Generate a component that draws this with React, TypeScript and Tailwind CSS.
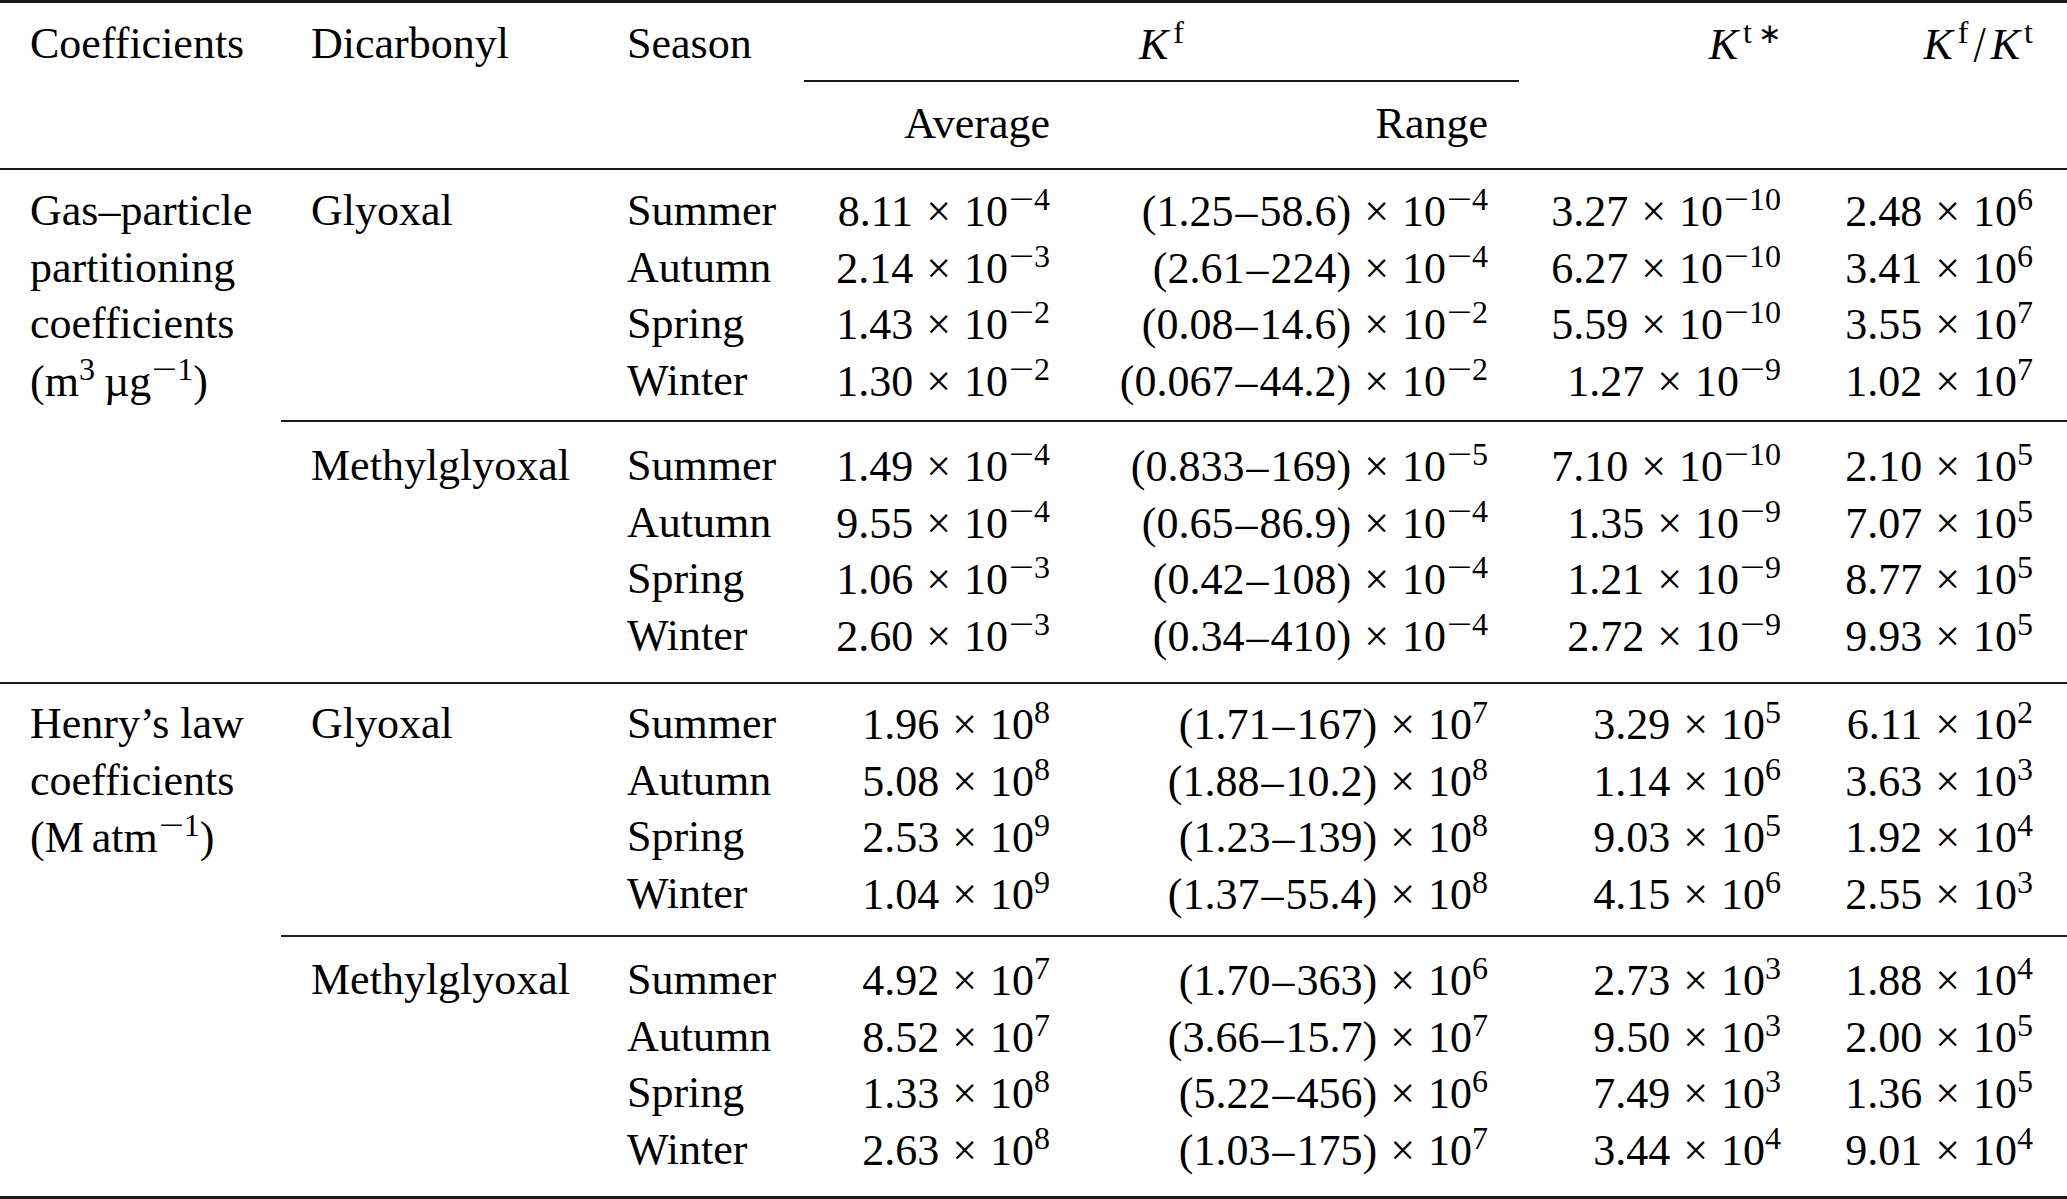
import React from 'react';

type Sci = [string, string];
type Row = { season: string; avg: Sci; range: Sci; kt: Sci; ratio: Sci };

// superscript; a leading minus is drawn as a wider math minus
function Sup({ children }: { children: string }) {
  const neg = children.startsWith('−');
  return (
    <span className="align-[16px] text-[32px] leading-none">
      {neg && <span className="mx-[4px] inline-block scale-x-[1.4]">−</span>}
      {neg ? children.slice(1) : children}
    </span>
  );
}

function Mantissa({ text }: { text: string }) {
  const parts = text.split('–');
  if (parts.length < 2) return <>{text}</>;
  return (
    <>
      {parts[0]}
      <span className="mx-[2px]">–</span>
      {parts[1]}
    </>
  );
}

function Num({ v }: { v: Sci }) {
  return (
    <>
      <Mantissa text={v[0]} /> <span className="px-[2px]">×</span> 10<Sup>{v[1]}</Sup>
    </>
  );
}

const g1: Row[] = [
  { season: 'Summer', avg: ['8.11', '−4'], range: ['(1.25–58.6)', '−4'], kt: ['3.27', '−10'], ratio: ['2.48', '6'] },
  { season: 'Autumn', avg: ['2.14', '−3'], range: ['(2.61–224)', '−4'], kt: ['6.27', '−10'], ratio: ['3.41', '6'] },
  { season: 'Spring', avg: ['1.43', '−2'], range: ['(0.08–14.6)', '−2'], kt: ['5.59', '−10'], ratio: ['3.55', '7'] },
  { season: 'Winter', avg: ['1.30', '−2'], range: ['(0.067–44.2)', '−2'], kt: ['1.27', '−9'], ratio: ['1.02', '7'] },
];

const g2: Row[] = [
  { season: 'Summer', avg: ['1.49', '−4'], range: ['(0.833–169)', '−5'], kt: ['7.10', '−10'], ratio: ['2.10', '5'] },
  { season: 'Autumn', avg: ['9.55', '−4'], range: ['(0.65–86.9)', '−4'], kt: ['1.35', '−9'], ratio: ['7.07', '5'] },
  { season: 'Spring', avg: ['1.06', '−3'], range: ['(0.42–108)', '−4'], kt: ['1.21', '−9'], ratio: ['8.77', '5'] },
  { season: 'Winter', avg: ['2.60', '−3'], range: ['(0.34–410)', '−4'], kt: ['2.72', '−9'], ratio: ['9.93', '5'] },
];

const g3: Row[] = [
  { season: 'Summer', avg: ['1.96', '8'], range: ['(1.71–167)', '7'], kt: ['3.29', '5'], ratio: ['6.11', '2'] },
  { season: 'Autumn', avg: ['5.08', '8'], range: ['(1.88–10.2)', '8'], kt: ['1.14', '6'], ratio: ['3.63', '3'] },
  { season: 'Spring', avg: ['2.53', '9'], range: ['(1.23–139)', '8'], kt: ['9.03', '5'], ratio: ['1.92', '4'] },
  { season: 'Winter', avg: ['1.04', '9'], range: ['(1.37–55.4)', '8'], kt: ['4.15', '6'], ratio: ['2.55', '3'] },
];

const g4: Row[] = [
  { season: 'Summer', avg: ['4.92', '7'], range: ['(1.70–363)', '6'], kt: ['2.73', '3'], ratio: ['1.88', '4'] },
  { season: 'Autumn', avg: ['8.52', '7'], range: ['(3.66–15.7)', '7'], kt: ['9.50', '3'], ratio: ['2.00', '5'] },
  { season: 'Spring', avg: ['1.33', '8'], range: ['(5.22–456)', '6'], kt: ['7.49', '3'], ratio: ['1.36', '5'] },
  { season: 'Winter', avg: ['2.63', '8'], range: ['(1.03–175)', '7'], kt: ['3.44', '4'], ratio: ['9.01', '4'] },
];

function Group({ name, rows, className }: { name: string; rows: Row[]; className: string }) {
  return (
    <div className={className}>
      {rows.map((r, i) => (
        <div
          key={r.season}
          className="grid h-[56.6px] grid-cols-[316px_207px_276px_439px_292px_256px] whitespace-nowrap"
        >
          <div className="pl-[30px]">{i === 0 ? name : ''}</div>
          <div className="pl-[30px]">{r.season}</div>
          <div className="pr-[30px] text-right">
            <Num v={r.avg} />
          </div>
          <div className="pr-[31px] text-right">
            <Num v={r.range} />
          </div>
          <div className="pr-[30px] text-right">
            <Num v={r.kt} />
          </div>
          <div className="pr-[34px] text-right">
            <Num v={r.ratio} />
          </div>
        </div>
      ))}
    </div>
  );
}

const K = () => <span className="italic">K</span>;

function HSup({ children, className }: { children: React.ReactNode; className: string }) {
  return <span className={`align-[16px] text-[32px] leading-none ${className}`}>{children}</span>;
}

export default function App() {
  return (
    <div className="h-[1199px] w-[2067px] bg-white font-['Liberation_Serif','Times_New_Roman',serif] text-[44px] leading-[56.6px] text-black">
      <div className="h-[3px] bg-[#1a1a1a]" />

      {/* Header */}
      <div className="pt-[13px] pb-[16px] whitespace-nowrap">
        <div className="grid h-[56.6px] grid-cols-[281px_316px_207px_715px_292px_256px]">
          <div className="pl-[30px]">Coefficients</div>
          <div className="pl-[30px]">Dicarbonyl</div>
          <div className="pl-[30px]">Season</div>
          <div className="text-center">
            <K />
            <HSup className="ml-[5px]">f</HSup>
          </div>
          <div className="pr-[30px] text-right">
            <K />
            <HSup className="ml-[5px]">
              t<span className="ml-[6px] text-[28px]">∗</span>
            </HSup>
          </div>
          <div className="pr-[34px] text-right">
            <K />
            <HSup className="ml-[5px]">f</HSup>
            <span className="mx-[5px] inline-block scale-y-[1.15]">/</span>
            <K />
            <HSup className="ml-[4px]">t</HSup>
          </div>
        </div>
        <div className="mt-[7px] grid grid-cols-[804px_715px_1fr]">
          <div />
          <div className="h-[2px] bg-[#1a1a1a]" />
          <div />
        </div>
        <div className="mt-[14px] grid h-[56.6px] grid-cols-[804px_276px_439px_1fr]">
          <div />
          <div className="pr-[30px] text-right">Average</div>
          <div className="pr-[31px] text-right">Range</div>
          <div />
        </div>
      </div>

      <div className="h-[2px] bg-[#1a1a1a]" />

      {/* Gas–particle partitioning */}
      <div className="flex">
        <div className="w-[281px] shrink-0 pl-[30px] pt-[13px] whitespace-nowrap">
          Gas–particle
          <br />
          partitioning
          <br />
          coefficients
          <br />
          (m<Sup>3</Sup>
          <span className="ml-[9px]">µg</span>
          <Sup>−1</Sup>)
        </div>
        <div className="flex flex-1 flex-col">
          <Group name="Glyoxal" rows={g1} className="pt-[13px] pb-[10.5px]" />
          <div className="h-[2px] bg-[#1a1a1a]" />
          <Group name="Methylglyoxal" rows={g2} className="pt-[16px] pb-[17.5px]" />
        </div>
      </div>

      <div className="h-[2px] bg-[#1a1a1a]" />

      {/* Henry's law */}
      <div className="flex">
        <div className="w-[281px] shrink-0 pl-[30px] pt-[12px] whitespace-nowrap">
          Henry’s law
          <br />
          coefficients
          <br />
          (M<span className="ml-[8px]">atm</span>
          <Sup>−1</Sup>)
        </div>
        <div className="flex flex-1 flex-col">
          <Group name="Glyoxal" rows={g3} className="pt-[12px] pb-[12.6px]" />
          <div className="h-[2px] bg-[#1a1a1a]" />
          <Group name="Methylglyoxal" rows={g4} className="pt-[15px] pb-[17.6px]" />
        </div>
      </div>

      <div className="h-[3px] bg-[#1a1a1a]" />
    </div>
  );
}
